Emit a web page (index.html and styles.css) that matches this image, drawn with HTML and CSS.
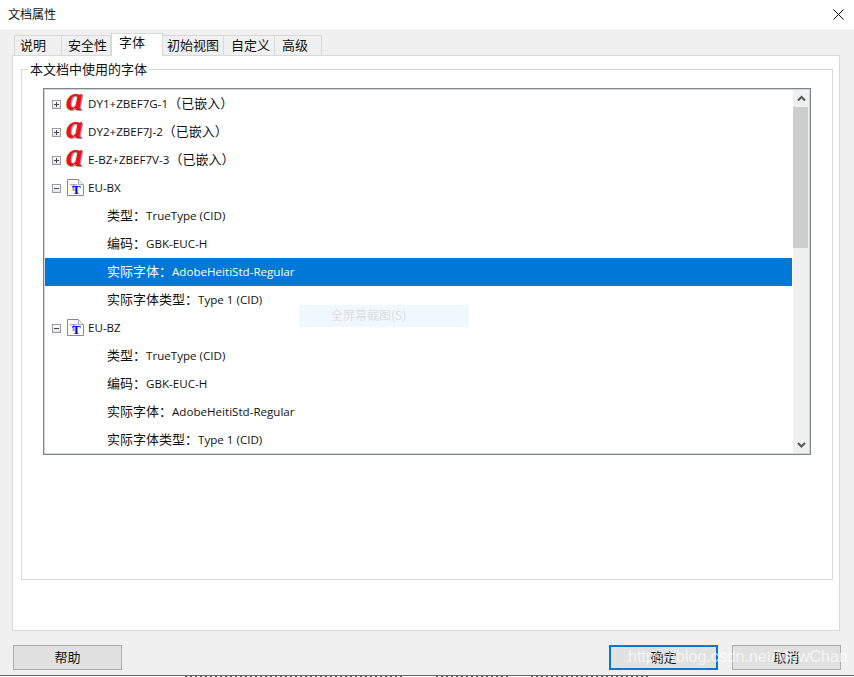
FILE: index.html
```html
<!DOCTYPE html>
<html lang="zh">
<head>
<meta charset="utf-8">
<title>文档属性</title>
<link rel="stylesheet" href="styles.css">
</head>
<body>
<div class="window">
  <div class="titlebar">
    <span class="title">文档属性</span>
    <svg class="close" width="11" height="11" viewBox="0 0 11 11"><path d="M0.5 0.5L10.5 10.5M10.5 0.5L0.5 10.5" stroke="#111" stroke-width="1" fill="none"/></svg>
  </div>
  <div class="content">
    <div class="tabs">
      <div class="tab w1">说明</div>
      <div class="tab w2">安全性</div>
      <div class="tab active w3">字体</div>
      <div class="tab w4">初始视图</div>
      <div class="tab w5">自定义</div>
      <div class="tab w6">高级</div>
    </div>
    <div class="panel">
      <div class="group">
        <div class="legend">本文档中使用的字体</div>
        <div class="list">
          <div class="tree">
            <div class="row"><span class="toggle plus"></span><span class="a-icon">a</span><span class="text">DY1+ZBEF7G-1<span class="cjk">（已嵌入）</span></span></div>
            <div class="row"><span class="toggle plus"></span><span class="a-icon">a</span><span class="text">DY2+ZBEF7J-2<span class="cjk">（已嵌入）</span></span></div>
            <div class="row"><span class="toggle plus"></span><span class="a-icon">a</span><span class="text">E-BZ+ZBEF7V-3<span class="cjk">（已嵌入）</span></span></div>
            <div class="row"><span class="toggle"></span><svg class="t-icon" width="17" height="17" viewBox="0 0 17 17"><path d="M0.5 0.5H11.5L16.5 5.5V16.5H0.5Z" fill="#fff" stroke="#8a8a8a"/><path d="M11.5 0.5V5.5H16.5" fill="#eee" stroke="#aaa"/><text x="3" y="12" class="t-shadow">T</text><text x="5" y="15" class="t-blue">T</text></svg><span class="text plain">EU-BX</span></div>
            <div class="row child"><span class="text"><span class="cjk">类型：</span>TrueType (CID)</span></div>
            <div class="row child"><span class="text"><span class="cjk">编码：</span>GBK-EUC-H</span></div>
            <div class="row child selected"><span class="text"><span class="cjk">实际字体：</span>AdobeHeitiStd-Regular</span></div>
            <div class="row child"><span class="text"><span class="cjk">实际字体类型：</span>Type 1 (CID)</span></div>
            <div class="row"><span class="toggle"></span><svg class="t-icon" width="17" height="17" viewBox="0 0 17 17"><path d="M0.5 0.5H11.5L16.5 5.5V16.5H0.5Z" fill="#fff" stroke="#8a8a8a"/><path d="M11.5 0.5V5.5H16.5" fill="#eee" stroke="#aaa"/><text x="3" y="12" class="t-shadow">T</text><text x="5" y="15" class="t-blue">T</text></svg><span class="text plain">EU-BZ</span></div>
            <div class="row child"><span class="text"><span class="cjk">类型：</span>TrueType (CID)</span></div>
            <div class="row child"><span class="text"><span class="cjk">编码：</span>GBK-EUC-H</span></div>
            <div class="row child"><span class="text"><span class="cjk">实际字体：</span>AdobeHeitiStd-Regular</span></div>
            <div class="row child"><span class="text"><span class="cjk">实际字体类型：</span>Type 1 (CID)</span></div>
          </div>
          <div class="scrollbar">
            <svg class="arrow" width="17" height="17" viewBox="0 0 17 17"><path d="M5 10.5L8.5 7L12 10.5" fill="none" stroke="#555" stroke-width="2"/></svg>
            <div class="track"><div class="thumb"></div></div>
            <svg class="arrow" width="17" height="17" viewBox="0 0 17 17"><path d="M5 7L8.5 10.5L12 7" fill="none" stroke="#555" stroke-width="2"/></svg>
          </div>
        </div>
      </div>
    </div>
    <div class="buttons">
      <div class="btn">帮助</div>
      <div class="btn ok">确定</div>
      <div class="btn">取消</div>
    </div>
  </div>
  <div class="behind">
    <span class="clip c1"></span>
    <span class="clip c2"></span>
    <span class="clip c3"></span>
  </div>
  <div class="screenshot-tip">全屏幕截图(S)</div>
  <div class="watermark">https://blog.csdn.net/MewChan</div>
</div>
</body>
</html>
```
FILE: styles.css
```css
* { box-sizing: border-box; }
html, body { margin: 0; padding: 0; }
body {
  font-family: "Open Sans", "Noto Sans CJK SC", sans-serif;
  font-size: 11.6px;
  color: #111;
  background: #fff;
}
.window {
  position: relative;
  width: 854px;
  height: 677px;
  display: flex;
  flex-direction: column;
  overflow: hidden;
}
.titlebar {
  height: 29px;
  flex: none;
  background: #fff;
  display: flex;
  align-items: center;
  justify-content: space-between;
  padding: 0 10px 1px 8px;
}
.title { font-family: "Noto Sans CJK SC", sans-serif; font-size: 12px; margin-bottom: 2px; }
.close { display: block; }
.content {
  height: 646px;
  flex: none;
  background: #f0f0f0;
  padding: 0 13px 0 12px;
}
.tabs {
  height: 26px;
  display: flex;
  align-items: flex-end;
  padding-left: 2px;
  position: relative;
  z-index: 1;
}
.tab {
  height: 20px;
  background: #f0f0f0;
  border: 1px solid #d9d9d9;
  border-bottom: none;
  border-left: none;
  font-family: "Noto Sans CJK SC", sans-serif;
  font-size: 13px;
  line-height: 18px;
  padding-left: 6px;
}
.tab.w1 { width: 48px; border-left: 1px solid #d9d9d9; padding-left: 5px; }
.tab.w2 { width: 49px; }
.tab.w3 { width: 52px; padding-left: 7px; }
.tab.w4 { width: 61px; padding-left: 4px; }
.tab.w5 { width: 51px; padding-left: 7px; }
.tab.w6 { width: 47px; padding-left: 7px; }
.tab.active {
  height: 23px;
  background: #fff;
  border-left: 1px solid #d9d9d9;
  line-height: 16px;
  margin-bottom: -1px;
}
.panel {
  height: 576px;
  margin-right: 1px;
  background: #fff;
  border: 1px solid #d9d9d9;
  padding: 13px 6px 0 8px;
}
.group {
  position: relative;
  height: 511px;
  border: 1px solid #d9d9d9;
  padding: 18px 21px 0;
}
.legend {
  position: absolute;
  left: 6px;
  top: -10px;
  padding: 0 2px;
  background: #fff;
  line-height: 18px;
  font-size: 13px;
  font-family: "Noto Sans CJK SC", sans-serif;
}
.list {
  height: 367px;
  border: 1px solid #7f858c;
  outline: 1px solid rgba(127, 133, 140, 0.35);
  outline-offset: -2px;
  padding: 1px;
  display: flex;
  background: #fff;
}
.tree { flex: 1; min-width: 0; overflow: hidden; }
.row {
  height: 28px;
  display: flex;
  align-items: center;
  padding-left: 7px;
  white-space: pre;
}
.row.child { padding-left: 62px; }
.row.selected { background: #0078d7; color: #fff; }
.text { display: block; line-height: 16px; height: 16px; margin-top: -3px; }
.text.plain { margin-top: -1px; }
.cjk { font-family: "Noto Sans CJK SC", sans-serif; font-size: 13px; }
.toggle {
  position: relative;
  width: 9px;
  height: 9px;
  margin-right: 5px;
  border: 1px solid #9a9a9a;
  background: linear-gradient(#fff, #e4e4e4);
}
.toggle::before {
  content: "";
  position: absolute;
  left: 1px;
  top: 3px;
  width: 5px;
  height: 1px;
  background: #3b4a60;
}
.toggle.plus::after {
  content: "";
  position: absolute;
  left: 3px;
  top: 1px;
  width: 1px;
  height: 5px;
  background: #3b4a60;
}
.a-icon {
  width: 17px;
  height: 20px;
  margin: -2px 5px 0 0;
  font-family: "Liberation Serif", serif;
  font-style: italic;
  font-weight: 700;
  font-size: 34px;
  line-height: 12px;
  color: #e4141c;
  text-shadow: 1px 1px 0 #9a9a9a;
  text-align: center;
}
.t-icon { display: block; margin: -2px 4px 0 1px; flex: none; }
.t-shadow {
  font-family: "Liberation Serif", serif;
  font-weight: 700;
  font-size: 11px;
  fill: #999;
}
.t-blue {
  font-family: "Liberation Serif", serif;
  font-weight: 700;
  font-size: 13px;
  fill: #0000e0;
}
.scrollbar {
  width: 16px;
  margin-left: 1px;
  background: #f0f0f0;
  display: flex;
  flex-direction: column;
  align-items: center;
}
.arrow { display: block; flex: none; }
.track { flex: 1; width: 16px; }
.thumb { width: 15px; height: 141px; margin-right: 1px; background: #cdcdcd; }
.buttons {
  display: flex;
  gap: 14px;
  margin-top: 14px;
  padding-left: 1px;
}
.btn {
  width: 109px;
  height: 25px;
  background: #e1e1e1;
  border: 1px solid #adadad;
  font-family: "Noto Sans CJK SC", sans-serif;
  font-size: 13px;
  line-height: 22px;
  text-align: center;
}
.btn.ok {
  margin-left: auto;
  border: 2px solid #0078d7;
  line-height: 20px;
}
.behind {
  flex: 1;
  background: #fff;
  border-top: 1px solid #666;
  display: flex;
  align-items: flex-start;
  padding-left: 185px;
}
.clip {
  display: block;
  height: 1px;
  background: repeating-linear-gradient(90deg, #555 0 2px, #fff 2px 5px);
}
.c1 { width: 220px; }
.c2 { width: 73px; margin-left: 31px; }
.c3 { width: 117px; margin-left: 22px; }
.screenshot-tip {
  position: absolute;
  left: 299px;
  top: 305px;
  width: 170px;
  height: 22px;
  padding-left: 32px;
  background: #f0f8ff;
  color: #dedede;
  font-size: 12px;
  line-height: 20px;
  font-family: "Noto Sans CJK SC", sans-serif;
}
.watermark {
  position: absolute;
  left: 628px;
  top: 648px;
  font-family: "Liberation Sans", sans-serif;
  font-size: 16px;
  line-height: 18px;
  color: rgba(255, 255, 255, 0.65);
  white-space: nowrap;
}
```
